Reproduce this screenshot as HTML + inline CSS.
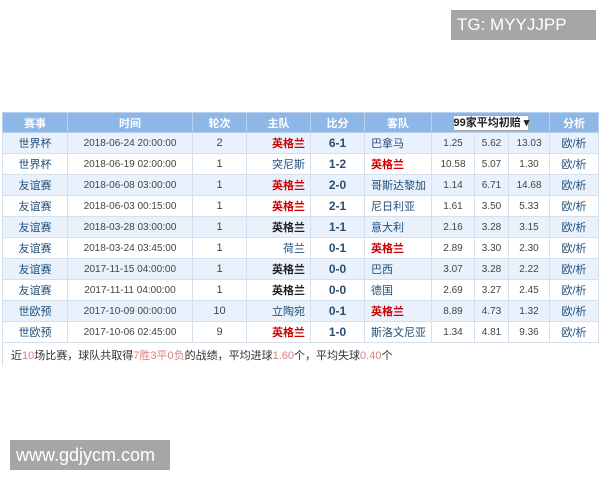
<!DOCTYPE html>
<html><head><meta charset="utf-8"><style>
body{margin:0;width:600px;height:480px;background:#fff;position:relative;overflow:hidden;font-family:"Liberation Sans","Noto Sans CJK SC",sans-serif}
table{position:absolute;left:2px;top:112px;border-collapse:collapse;table-layout:fixed;width:596px;font-size:11px;color:#444}
td,th{border:1px solid #d4e0ec;height:20px;padding:0;text-align:center;white-space:nowrap;overflow:hidden}
th{background:#8db7e6;color:#fff;font-weight:bold;height:19px;border-color:#b9d1ee}
tr.a td{background:#e9f2fc}
.n{font-size:10px}
.t{color:#1f4e79}
.r{color:#c00;font-weight:bold}
.b{font-weight:bold;color:#222}
.s{font-weight:bold;color:#2b4f70;font-size:12px}
.h{text-align:right;padding-right:5px}
.g{text-align:left;padding-left:6px}
.sel{display:inline-block;background:#fff;color:#222;width:74px;height:14px;line-height:14px;font-size:11px;border:1px solid #aaa}
.sum td{text-align:left;padding-left:8px;height:23px;border-right:none;border-bottom:none;color:#333}
.o{color:#d98080}
.wm{position:absolute;background:#a6a6a6;color:#fff;font-size:17px}
</style></head><body>
<div class="wm" style="left:451px;top:10px;width:139px;height:30px;line-height:30px;padding-left:6px">TG: MYYJJPP</div>
<div class="wm" style="left:10px;top:440px;width:154px;height:30px;line-height:30px;padding-left:6px;font-size:18px">www.gdjycm.com</div>
<table>
<colgroup><col style="width:65px"><col style="width:125px"><col style="width:54px"><col style="width:64px"><col style="width:54px"><col style="width:67px"><col style="width:43px"><col style="width:34px"><col style="width:41px"><col style="width:49px"></colgroup>
<tr><th>赛事</th><th>时间</th><th>轮次</th><th>主队</th><th>比分</th><th>客队</th><th colspan="3"><span class="sel">99家平均初赔 ▾</span></th><th>分析</th></tr>
<tr class="a"><td class="t">世界杯</td><td class="n">2018-06-24 20:00:00</td><td>2</td><td class="h r">英格兰</td><td class="s">6-1</td><td class="g t">巴拿马</td><td class="n">1.25</td><td class="n">5.62</td><td class="n">13.03</td><td class="t">欧/析</td></tr>
<tr><td class="t">世界杯</td><td class="n">2018-06-19 02:00:00</td><td>1</td><td class="h t">突尼斯</td><td class="s">1-2</td><td class="g r">英格兰</td><td class="n">10.58</td><td class="n">5.07</td><td class="n">1.30</td><td class="t">欧/析</td></tr>
<tr class="a"><td class="t">友谊赛</td><td class="n">2018-06-08 03:00:00</td><td>1</td><td class="h r">英格兰</td><td class="s">2-0</td><td class="g t">哥斯达黎加</td><td class="n">1.14</td><td class="n">6.71</td><td class="n">14.68</td><td class="t">欧/析</td></tr>
<tr><td class="t">友谊赛</td><td class="n">2018-06-03 00:15:00</td><td>1</td><td class="h r">英格兰</td><td class="s">2-1</td><td class="g t">尼日利亚</td><td class="n">1.61</td><td class="n">3.50</td><td class="n">5.33</td><td class="t">欧/析</td></tr>
<tr class="a"><td class="t">友谊赛</td><td class="n">2018-03-28 03:00:00</td><td>1</td><td class="h b">英格兰</td><td class="s">1-1</td><td class="g t">意大利</td><td class="n">2.16</td><td class="n">3.28</td><td class="n">3.15</td><td class="t">欧/析</td></tr>
<tr><td class="t">友谊赛</td><td class="n">2018-03-24 03:45:00</td><td>1</td><td class="h t">荷兰</td><td class="s">0-1</td><td class="g r">英格兰</td><td class="n">2.89</td><td class="n">3.30</td><td class="n">2.30</td><td class="t">欧/析</td></tr>
<tr class="a"><td class="t">友谊赛</td><td class="n">2017-11-15 04:00:00</td><td>1</td><td class="h b">英格兰</td><td class="s">0-0</td><td class="g t">巴西</td><td class="n">3.07</td><td class="n">3.28</td><td class="n">2.22</td><td class="t">欧/析</td></tr>
<tr><td class="t">友谊赛</td><td class="n">2017-11-11 04:00:00</td><td>1</td><td class="h b">英格兰</td><td class="s">0-0</td><td class="g t">德国</td><td class="n">2.69</td><td class="n">3.27</td><td class="n">2.45</td><td class="t">欧/析</td></tr>
<tr class="a"><td class="t">世欧预</td><td class="n">2017-10-09 00:00:00</td><td>10</td><td class="h t">立陶宛</td><td class="s">0-1</td><td class="g r">英格兰</td><td class="n">8.89</td><td class="n">4.73</td><td class="n">1.32</td><td class="t">欧/析</td></tr>
<tr><td class="t">世欧预</td><td class="n">2017-10-06 02:45:00</td><td>9</td><td class="h r">英格兰</td><td class="s">1-0</td><td class="g t">斯洛文尼亚</td><td class="n">1.34</td><td class="n">4.81</td><td class="n">9.36</td><td class="t">欧/析</td></tr>
<tr class="sum"><td colspan="10">近<span class="o">10</span>场比赛，球队共取得<span class="o">7胜3平0负</span>的战绩，平均进球<span class="o">1.60</span>个，平均失球<span class="o">0.40</span>个</td></tr>
</table>
</body></html>
